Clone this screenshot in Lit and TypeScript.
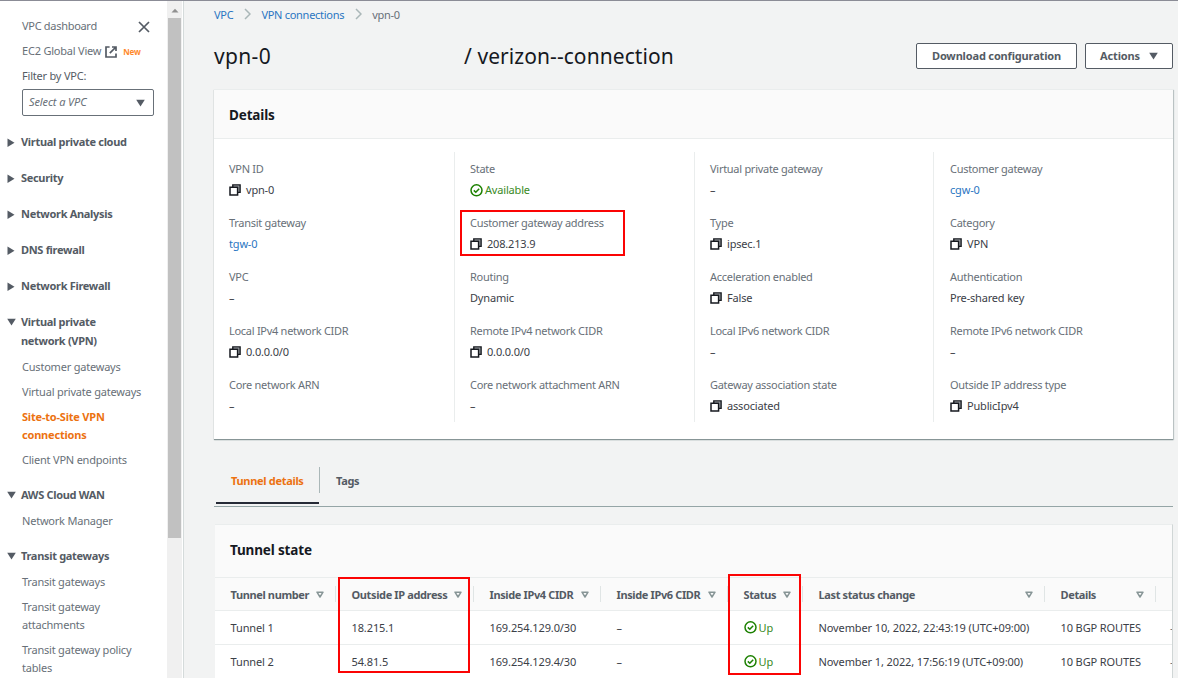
import { LitElement, html, svg, css, nothing } from "lit";
import { customElement, property } from "lit/decorators.js";
import { classMap } from "lit/directives/class-map.js";

interface NavGroup { title: string[]; open: boolean; links: { lines: string[]; active?: boolean }[] }
interface Field { label: string; value: string; kind?: "copy" | "link" | "ok" }

const link = (...lines: string[]) => ({ lines });

const NAV: NavGroup[] = [
  { title: ["Virtual private cloud"], open: false, links: [] },
  { title: ["Security"], open: false, links: [] },
  { title: ["Network Analysis"], open: false, links: [] },
  { title: ["DNS firewall"], open: false, links: [] },
  { title: ["Network Firewall"], open: false, links: [] },
  {
    title: ["Virtual private", "network (VPN)"], open: true,
    links: [
      link("Customer gateways"),
      link("Virtual private gateways"),
      { lines: ["Site-to-Site VPN", "connections"], active: true },
      link("Client VPN endpoints"),
    ],
  },
  { title: ["AWS Cloud WAN"], open: true, links: [link("Network Manager")] },
  {
    title: ["Transit gateways"], open: true,
    links: [link("Transit gateways"), link("Transit gateway", "attachments"), link("Transit gateway policy", "tables")],
  },
];

const COLUMNS: Field[][] = [
  [
    { label: "VPN ID", value: "vpn-0", kind: "copy" },
    { label: "Transit gateway", value: "tgw-0", kind: "link" },
    { label: "VPC", value: "–" },
    { label: "Local IPv4 network CIDR", value: "0.0.0.0/0", kind: "copy" },
    { label: "Core network ARN", value: "–" },
  ],
  [
    { label: "State", value: "Available", kind: "ok" },
    { label: "Customer gateway address", value: "208.213.9", kind: "copy" },
    { label: "Routing", value: "Dynamic" },
    { label: "Remote IPv4 network CIDR", value: "0.0.0.0/0", kind: "copy" },
    { label: "Core network attachment ARN", value: "–" },
  ],
  [
    { label: "Virtual private gateway", value: "–" },
    { label: "Type", value: "ipsec.1", kind: "copy" },
    { label: "Acceleration enabled", value: "False", kind: "copy" },
    { label: "Local IPv6 network CIDR", value: "–" },
    { label: "Gateway association state", value: "associated", kind: "copy" },
  ],
  [
    { label: "Customer gateway", value: "cgw-0", kind: "link" },
    { label: "Category", value: "VPN", kind: "copy" },
    { label: "Authentication", value: "Pre-shared key" },
    { label: "Remote IPv6 network CIDR", value: "–" },
    { label: "Outside IP address type", value: "PublicIpv4", kind: "copy" },
  ],
];

const HEADS = ["Tunnel number", "Outside IP address", "Inside IPv4 CIDR", "Inside IPv6 CIDR", "Status", "Last status change", "Details"];
const ROWS = [
  ["Tunnel 1", "18.215.1", "169.254.129.0/30", "–", "Up", "November 10, 2022, 22:43:19 (UTC+09:00)", "10 BGP ROUTES"],
  ["Tunnel 2", "54.81.5", "169.254.129.4/30", "–", "Up", "November 1, 2022, 17:56:19 (UTC+09:00)", "10 BGP ROUTES"],
];

const SHAPES: Record<string, { w: number; h: number; body: unknown }> = {
  right: { w: 8, h: 10, body: svg`<path d="M0.5 0.5 7.5 4.7 0.5 9Z" fill="#545b64"/>` },
  down: { w: 9, h: 8, body: svg`<path d="M0.2 0.8H8.8L4.5 7.5Z" fill="#545b64"/>` },
  sort: { w: 8, h: 7, body: svg`<path d="M1 1.2H7L4 6Z" fill="none" stroke="#879596" stroke-width="1.5" stroke-linejoin="round"/>` },
  close: { w: 12, h: 12, body: svg`<path d="M1 1 11 11M11 1 1 11" stroke="#545b64" stroke-width="1.7"/>` },
  external: {
    w: 12, h: 12,
    body: svg`<path d="M4.6 1H1V11H11V7.6M7 1H11V5M11 1 4.8 7.2" fill="none" stroke="#545b64" stroke-width="1.7"/>`,
  },
  crumb: { w: 7, h: 12, body: svg`<path d="M1 1 6 6 1 11" fill="none" stroke="#aab7b8" stroke-width="1.5"/>` },
  copy: {
    w: 12, h: 12,
    body: svg`<path d="M3.8 0.9H11.1V8.4H3.8Z" fill="#a4a8ad" stroke="#16191f" stroke-width="1.4"/><path d="M1 3.2H8.6V11H1Z" fill="#fff" stroke="#16191f" stroke-width="1.5"/>`,
  },
  ok: {
    w: 13, h: 13,
    body: svg`<circle cx="6.5" cy="6.3" r="5.5" fill="none" stroke="#1d8102" stroke-width="1.5"/><path d="M3.8 6.4 5.8 8.3 9.2 4.7" fill="none" stroke="#1d8102" stroke-width="1.5"/>`,
  },
  scrollup: { w: 8, h: 5, body: svg`<path d="M0.5 4.5H7.5L4 0.8Z" fill="#909090"/>` },
};

@customElement("ui-icon")
class UiIcon extends LitElement {
  @property() name = "";
  static styles = css`
    :host { display: inline-flex; flex: none; }
    svg { display: block; }
  `;
  render() {
    const s = SHAPES[this.name];
    return html`<svg width=${s.w} height=${s.h} viewBox="0 0 ${s.w} ${s.h}">${s.body}</svg>`;
  }
}

@customElement("side-nav")
class SideNav extends LitElement {
  static styles = css`
    :host { display: flex; height: 100%; overflow: hidden; background: #fff; color: #687078; letter-spacing: -0.21px; }
    .list { width: 167px; box-sizing: border-box; padding-top: 16px; white-space: nowrap; line-height: 18px; }
    .top { display: flex; align-items: center; height: 18px; margin: 0 17px 7px 22px; }
    .top.first { justify-content: space-between; letter-spacing: -0.3px; }
    .top.first ui-icon { margin-top: 2px; }
    .top.dark { color: #545b64; margin-bottom: 4px; }
    .ext { margin: 1px 0 0 4px; }
    .new { color: #ff8a2b; font-size: 8px; font-weight: 700; margin-left: 6px; padding-top: 1px; }
    .select { display: flex; align-items: center; justify-content: space-between; box-sizing: border-box;
      width: 132px; height: 27px; margin-left: 22px; padding: 0 8px 0 6px; border: 1px solid #687078;
      border-radius: 2px; font-style: italic; font-size: 11px; letter-spacing: -0.1px; }
    .select span { margin-top: -2px; }
    .title { display: grid; grid-template-columns: 14px auto; margin: 18px 0 0 7px; color: #545b64; font-weight: 700; letter-spacing: -0.31px; }
    .title.first { margin-top: 17px; }
    .title.after { margin-top: 17px; }
    .title.two { line-height: 18.5px; }
    .caret { margin-top: 4.5px; }
    .links { display: flex; flex-direction: column; gap: 7px; margin: 8px 0 0 22px; }
    .active { color: #ec7211; font-weight: 700; letter-spacing: -0.2px; }
    .bar { width: 15px; background: #f0f0f0; display: flex; flex-direction: column; align-items: center; padding-top: 7px; }
    .thumb { width: 13px; height: 520px; margin-top: 5px; background: #c1c1c1; }
    .edge { width: 1px; margin-left: 1px; background: #d5dbdb; }
  `;
  render() {
    const lines = (l: string[]) => l.map((t) => html`<div>${t}</div>`);
    return html`
      <div class="list">
        <div class="top first"><span>VPC dashboard</span><ui-icon name="close"></ui-icon></div>
        <div class="top"><span>EC2 Global View</span><ui-icon class="ext" name="external"></ui-icon><span class="new">New</span></div>
        <div class="top dark">Filter by VPC:</div>
        <div class="select"><span>Select a VPC</span><ui-icon name="down"></ui-icon></div>
        ${NAV.map((g, i) => html`
          <div class=${classMap({ title: true, first: i === 0, after: i > 0 && NAV[i - 1].links.length > 0, two: g.title.length > 1 })}>
            <ui-icon class="caret" name=${g.open ? "down" : "right"}></ui-icon>
            <div>${lines(g.title)}</div>
          </div>
          ${g.links.length
            ? html`<div class="links">${g.links.map((l) => html`<div class=${classMap({ active: !!l.active })}>${lines(l.lines)}</div>`)}</div>`
            : nothing}`)}
      </div>
      <div class="bar"><ui-icon name="scrollup"></ui-icon><div class="thumb"></div></div>
      <div class="edge"></div>`;
  }
}

@customElement("details-card")
class DetailsCard extends LitElement {
  static styles = css`
    :host { display: block; box-sizing: border-box; height: 350px; background: #fff; border-top: 1px solid #eaeded;
      box-shadow: 0 1px 1px #879596, 1px 1px 1px #c5cccd; }
    .head { height: 49px; line-height: 51px; box-sizing: border-box; padding-left: 15px; background: #fafafa; border-bottom: 1px solid #eaeded;
      font-size: 13.5px; font-weight: 700; color: #16191f; letter-spacing: -0.15px; }
    .cols { display: grid; grid-template-columns: 225px 240px 239px 1fr; padding: 13px 15px 0; }
    .col + .col { border-left: 1px solid #eaeded; padding-left: 15px; }
    .col:last-child { padding-left: 16px; }
    .col { padding-top: 8px; height: 262px; }
    .field { height: 54px; line-height: 18px; }
    .label { color: #687078; margin-bottom: 3px; letter-spacing: -0.28px; }
    .value { display: flex; align-items: center; height: 18px; gap: 5px; color: #3b4047; letter-spacing: -0.18px; }
    .link { color: #2a76c2; }
    .ok { color: #3a8a24; gap: 2px; }
  `;
  render() {
    return html`
      <div class="head">Details</div>
      <div class="cols">
        ${COLUMNS.map((c) => html`<div class="col">${c.map((f) => html`
          <div class="field">
            <div class="label">${f.label}</div>
            <div class=${classMap({ value: true, link: f.kind === "link", ok: f.kind === "ok" })}>
              ${f.kind === "copy" || f.kind === "ok" ? html`<ui-icon name=${f.kind}></ui-icon>` : nothing}<span>${f.value}</span>
            </div>
          </div>`)}</div>`)}
      </div>`;
  }
}

@customElement("tunnel-table")
class TunnelTable extends LitElement {
  static styles = css`
    :host { display: block; height: 154px; overflow: hidden; background: #fff; border-top: 1px solid #eaeded; border-right: 1px solid #d0d6d6; }
    .head { height: 52px; line-height: 51px; padding-left: 15px; background: #fafafa; font-size: 13.5px; font-weight: 700; color: #16191f; letter-spacing: -0.15px; }
    .row { display: grid; grid-template-columns: 121px 138px 127px 127px 75px 242px 111px 1fr; height: 34px;
      align-items: center; box-sizing: border-box; border-bottom: 1px solid #eaeded; color: #3b4047; white-space: nowrap; letter-spacing: -0.11px; }
    .row.titles { height: 34px; background: #fafafa; border-top: 1px solid #eaeded; color: #545b64; font-weight: 700; letter-spacing: -0.37px; }
    .cell { display: flex; align-items: center; gap: 2px; padding-left: 15.5px; }
    .titles .cell { justify-content: space-between; height: 16px; padding-right: 11px; border-right: 1px solid #e0e5e5; }
    .ok { color: #3a8a24; }
    .more { padding-left: 14px; overflow: hidden; color: #687078; }
  `;
  render() {
    return html`
      <div class="head">Tunnel state</div>
      <div class="row titles">${HEADS.map((h) => html`<div class="cell"><span>${h}</span><ui-icon name="sort"></ui-icon></div>`)}</div>
      ${ROWS.map((r) => html`<div class="row">
        ${r.map((t, i) => html`<div class=${classMap({ cell: true, ok: i === 4 })}>${i === 4 ? html`<ui-icon name="ok"></ui-icon>` : nothing}<span>${t}</span></div>`)}
        <div class="more">–</div>
      </div>`)}`;
  }
}

@customElement("app-root")
class AppRoot extends LitElement {
  static styles = css`
    :host { display: grid; grid-template-columns: 184px 1fr; box-sizing: border-box; width: 1178px; height: 678px;
      overflow: hidden; position: relative; border-top: 1px solid #8b8c96; background: #f2f3f3;
      font: 11px "Noto Sans", "Open Sans", sans-serif; color: #16191f; }
    side-nav { min-height: 0; }
    .main { padding: 4px 5px 0 30px; min-width: 0; }
    .crumbs { display: flex; align-items: center; height: 18px; gap: 10.5px; color: #687078; letter-spacing: -0.28px; }
    .blue { color: #2a76c2; }
    .bar { display: flex; align-items: center; height: 66px; }
    .heading { display: flex; flex: 1; font-size: 21px; line-height: 30px; }
    .id { width: 250px; letter-spacing: 0.35px; }
    .name { letter-spacing: 0.07px; }
    .btn { display: flex; align-items: center; justify-content: center; gap: 9px; box-sizing: border-box; height: 26px; margin-left: 8px;
      border: 1px solid #545b64; border-radius: 2px; background: #fff; color: #545b64; font-weight: 700; letter-spacing: -0.16px; margin-bottom: 1px; }
    .download { width: 161px; }
    .actions { width: 88px; }
    .tabs { display: flex; height: 39px; margin-top: 28px; padding-left: 2px; border-bottom: 1px solid #95a5a6; font-weight: 700; color: #545b64; letter-spacing: -0.31px; }
    .tab { display: flex; align-items: center; box-sizing: border-box; height: 26px; padding: 0 15px; white-space: nowrap; }
    .tab.tags { padding-left: 17px; }
    .on { width: 103px; height: 37px; border-bottom: 2px solid #262a36; color: #ec7211; box-sizing: border-box; }
    .on .tab { width: 104px; border-right: 1px solid #aab7b8; padding-right: 0; }
    tunnel-table { margin: 17px 0 0 1px; }
    .mark { position: absolute; box-sizing: border-box; border: 2px solid #fb0404; }
    .address { left: 460px; top: 209px; width: 165px; height: 46px; }
    .outside { left: 338px; top: 576px; width: 132px; height: 96px; }
    .status { left: 728px; top: 573px; width: 73px; height: 101px; }
  `;
  render() {
    return html`
      <side-nav></side-nav>
      <div class="main">
        <div class="crumbs">
          <span class="blue">VPC</span><ui-icon name="crumb"></ui-icon>
          <span class="blue">VPN connections</span><ui-icon name="crumb"></ui-icon><span>vpn-0</span>
        </div>
        <div class="bar">
          <div class="heading"><span class="id">vpn-0</span><span class="name">/ verizon--connection</span></div>
          <div class="btn download">Download configuration</div>
          <div class="btn actions">Actions <ui-icon name="down"></ui-icon></div>
        </div>
        <details-card></details-card>
        <div class="tabs">
          <div class="on"><div class="tab">Tunnel details</div></div>
          <div class="tab tags">Tags</div>
        </div>
        <tunnel-table></tunnel-table>
      </div>
      <div class="mark address"></div>
      <div class="mark outside"></div>
      <div class="mark status"></div>`;
  }
}
